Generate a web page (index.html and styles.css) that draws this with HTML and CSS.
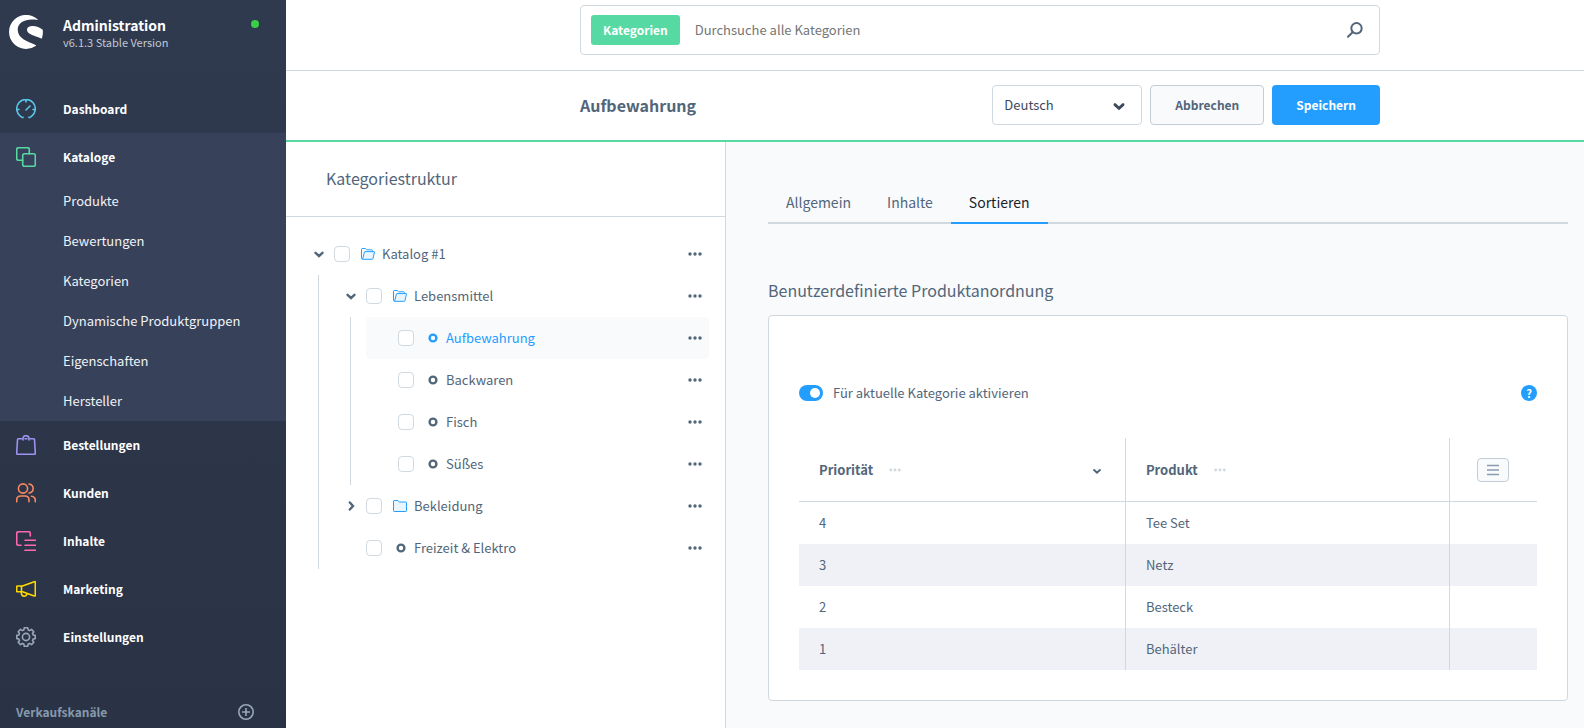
FILE: index.html
```html
<!DOCTYPE html>
<html lang="de">
<head>
<meta charset="utf-8">
<title>Aufbewahrung | Kategorien | Administration</title>
<link rel="stylesheet" href="styles.css">
</head>
<body>
<svg class="sprite" aria-hidden="true">
  <symbol id="chevron" viewBox="0 0 12 12"><path d="M2.500 4.800L6 8l3.500-3.200" fill="none" stroke="currentColor" stroke-width="2.400" stroke-linecap="round" stroke-linejoin="miter"/></symbol>
  <symbol id="dots" viewBox="0 0 14 4"><circle cx="2" cy="2" r="1.700"/><circle cx="7" cy="2" r="1.700"/><circle cx="12" cy="2" r="1.700"/></symbol>
  <symbol id="folder-open" viewBox="0 0 14 12"><path d="M1.6 11.3L3.4 3.6H13.5L11.7 11.3Z" fill="#e9f5ff"/><path d="M2 11.3C1 11.3.5 11 .5 10V1.2C.5.8.8.5 1.2.5H4.2L5.6 1.8H10.6C11 1.8 11.3 2 11.3 2.5V3.6M1.6 11.3L3.4 4C3.5 3.7 3.7 3.6 4 3.6H13.1C13.4 3.6 13.6 3.8 13.5 4.1L11.9 10.8C11.8 11.1 11.6 11.3 11.3 11.3H2" fill="none" stroke="currentColor"/></symbol>
  <symbol id="folder" viewBox="0 0 14 12"><path d="M.5 1.2C.5.8.8.5 1.2.5H4.8L6.4 2H12.8C13.2 2 13.5 2.3 13.5 2.7V10.8C13.5 11.2 13.2 11.5 12.8 11.5H1.2C.8 11.5.5 11.2.5 10.8Z" fill="#e9f5ff" stroke="currentColor"/></symbol>
  <symbol id="ring" viewBox="0 0 10 10"><circle cx="5" cy="5" r="3.4" fill="none" stroke="currentColor" stroke-width="2.4"/></symbol>
</svg>
<div class="app">
  <aside class="sidebar">
    <header class="brand">
      <svg class="brand-logo" viewBox="0 0 34 34" aria-hidden="true"><path d="M28.700 4.500A17 17 0 1 0 27 30.700C27.200 30.400 27 30.100 26.600 29.900C18 26.400 8.700 23.500 8.700 14.600C8.700 8 15.500 4.600 22.500 4.600C25 4.600 27 4.700 28.400 5C28.900 5.100 29.100 4.800 28.700 4.500Z" fill="#fff"/><path d="M33.700 14.800C31 12.500 27.500 11.100 23.500 11.100C20.200 11.100 18 12.400 18 14.800C18 18.300 22.500 19.900 27 21.500C29.200 22.300 31 23 32.200 23.500C32.700 23.700 32.900 23.600 33 23.100C33.800 20.500 34.100 17.500 33.700 14.800Z" fill="#fff"/></svg>
      <div class="brand-text">
        <strong class="brand-name">Administration</strong>
        <span class="brand-version">v6.1.3 Stable Version</span>
      </div>
      <span class="brand-status"></span>
    </header>
    <nav class="nav">
      <a class="nav-item" href="#"><svg class="nav-icon cyan" viewBox="0 0 20 20"><path d="M7 18.300C6.800 18.700 5.700 18.500 4.500 17.300A9.300 9.300 0 1 1 15.500 17.300C14.300 18.500 13.200 18.700 13 18.300M10 11L14 7M1 10.500H3M17 10.500H19M10 1V3"/></svg>Dashboard</a>
      <div class="nav-group">
        <a class="nav-item" href="#"><svg class="nav-icon green" viewBox="0 0 20 20"><rect x="6.700" y="6.700" width="12.600" height="12.600" rx="1.800"/><path d="M6.700 13.300H2.500Q.7 13.300.7 11.500V2.500Q.7.7 2.500.7H11.500Q13.300.7 13.300 2.500V6.700"/></svg>Kataloge</a>
        <a class="nav-sub" href="#">Produkte</a>
        <a class="nav-sub" href="#">Bewertungen</a>
        <a class="nav-sub" href="#">Kategorien</a>
        <a class="nav-sub" href="#">Dynamische Produktgruppen</a>
        <a class="nav-sub" href="#">Eigenschaften</a>
        <a class="nav-sub" href="#">Hersteller</a>
      </div>
      <a class="nav-item" href="#"><svg class="nav-icon violet" viewBox="0 0 20 20"><path d="M5.500 3.700H2.300Q1.500 3.700 1.500 4.500L.7 18.200Q.7 19.300 1.800 19.300H18.200Q19.300 19.300 19.300 18.200L18.500 4.500Q18.500 3.700 17.700 3.700H14.500M7 5V3.500C7 1.500 8.200.7 10 .7S13 1.500 13 3.500V5M9 3.700H11"/></svg>Bestellungen</a>
      <a class="nav-item" href="#"><svg class="nav-icon orange" viewBox="0 0 20 20"><circle cx="7" cy="5.500" r="4.600"/><path d="M.7 18.700V17Q.7 13 4.700 13H9Q13 13 13 17V18.700M13 1C18.500 1.800 18.500 9 13 10M15.500 13.200Q19.300 13.800 19.300 17V18.700"/></svg>Kunden</a>
      <a class="nav-item" href="#"><svg class="nav-icon pink" viewBox="0 0 20 20"><path d="M5 14.300H2.500Q.7 14.300.7 12.500V2.500Q.7.7 2.500.7H12.500Q14.300.7 14.300 2.500V5M9 9.300H19.500M9 14.300H19.500M9 19.300H19.500"/></svg>Inhalte</a>
      <a class="nav-item" href="#"><svg class="nav-icon yellow" viewBox="0 0 20 20"><path d="M6.500 7H1.500Q.7 7 .7 7.800V12Q.7 12.800 1.500 12.800H6.500M5.500 7V12.800M6.500 7L18.300 2.700Q19.300 2.400 19.300 3.400V16.300Q19.300 17.300 18.300 17L6.500 12.800M5.500 12.800C5 15.500 6.200 17.200 8.200 17.200C9.800 17.200 10.800 16 11 14.500"/></svg>Marketing</a>
      <a class="nav-item" href="#"><svg class="nav-icon grey" viewBox="0 0 20 20"><circle cx="10" cy="10" r="3.600"/><path d="M8.300.8H11.700L12.200 3L13.600 3.600L15.500 2.400L17.800 4.700L16.500 6.500L17.100 8L19.200 8.400V11.600L17.100 12L16.500 13.500L17.800 15.300L15.500 17.600L13.600 16.400L12.200 17L11.700 19.200H8.300L7.800 17L6.400 16.400L4.500 17.600L2.200 15.300L3.500 13.500L2.900 12L.8 11.600V8.400L2.900 8L3.500 6.500L2.200 4.700L4.500 2.400L6.400 3.600L7.800 3Z"/></svg>Einstellungen</a>
    </nav>
    <div class="channels">
      <span>Verkaufskanäle</span>
      <button class="icon-button" type="button" aria-label="Verkaufskanal hinzufügen"><svg class="channels-add" viewBox="0 0 16 16"><path d="M8 4V12M4 8H12"/><circle cx="8" cy="8" r="7.200"/></svg></button>
    </div>
  </aside>

  <main class="page">
    <div class="searchbar">
      <div class="search">
        <button class="search-type" type="button">Kategorien</button>
        <input class="search-input" type="search" placeholder="Durchsuche alle Kategorien" aria-label="Suche">
        <svg class="search-icon" viewBox="0 0 16 16" aria-hidden="true"><circle cx="9.500" cy="6.300" r="5.200"/><path d="M5.600 10.200L1 14.800"/></svg>
      </div>
    </div>
    <div class="smartbar">
      <div class="smartbar-inner">
        <h1 class="smartbar-title">Aufbewahrung</h1>
        <div class="select">
          <select class="select-field" aria-label="Sprache"><option>Deutsch</option><option>English</option></select>
          <svg class="select-arrow" aria-hidden="true"><use href="#chevron"/></svg>
        </div>
        <button class="button" type="button">Abbrechen</button>
        <button class="button button-primary" type="button">Speichern</button>
      </div>
    </div>

    <div class="content">
      <section class="structure">
        <h2 class="structure-title">Kategoriestruktur</h2>
        <ul class="tree">
          <li>
            <div class="row"><button class="toggle" type="button" aria-label="Zuklappen"><svg class="chevron"><use href="#chevron"/></svg></button><input class="check" type="checkbox" id="c1"><svg class="folder"><use href="#folder-open"/></svg><label class="row-label" for="c1">Katalog #1</label><button class="icon-button" type="button" aria-label="Menü"><svg class="dots"><use href="#dots"/></svg></button></div>
            <ul class="branch">
              <li>
                <div class="row"><button class="toggle" type="button" aria-label="Zuklappen"><svg class="chevron"><use href="#chevron"/></svg></button><input class="check" type="checkbox" id="c2"><svg class="folder"><use href="#folder-open"/></svg><label class="row-label" for="c2">Lebensmittel</label><button class="icon-button" type="button" aria-label="Menü"><svg class="dots"><use href="#dots"/></svg></button></div>
                <ul class="branch">
                  <li><div class="row leaf active"><input class="check" type="checkbox" id="c3"><svg class="ring"><use href="#ring"/></svg><label class="row-label" for="c3">Aufbewahrung</label><button class="icon-button" type="button" aria-label="Menü"><svg class="dots"><use href="#dots"/></svg></button></div></li>
                  <li><div class="row leaf"><input class="check" type="checkbox" id="c4"><svg class="ring"><use href="#ring"/></svg><label class="row-label" for="c4">Backwaren</label><button class="icon-button" type="button" aria-label="Menü"><svg class="dots"><use href="#dots"/></svg></button></div></li>
                  <li><div class="row leaf"><input class="check" type="checkbox" id="c5"><svg class="ring"><use href="#ring"/></svg><label class="row-label" for="c5">Fisch</label><button class="icon-button" type="button" aria-label="Menü"><svg class="dots"><use href="#dots"/></svg></button></div></li>
                  <li><div class="row leaf"><input class="check" type="checkbox" id="c6"><svg class="ring"><use href="#ring"/></svg><label class="row-label" for="c6">Süßes</label><button class="icon-button" type="button" aria-label="Menü"><svg class="dots"><use href="#dots"/></svg></button></div></li>
                </ul>
              </li>
              <li><div class="row"><button class="toggle" type="button" aria-label="Aufklappen"><svg class="chevron closed"><use href="#chevron"/></svg></button><input class="check" type="checkbox" id="c7"><svg class="folder"><use href="#folder"/></svg><label class="row-label" for="c7">Bekleidung</label><button class="icon-button" type="button" aria-label="Menü"><svg class="dots"><use href="#dots"/></svg></button></div></li>
              <li><div class="row leaf"><input class="check" type="checkbox" id="c8"><svg class="ring"><use href="#ring"/></svg><label class="row-label" for="c8">Freizeit &amp; Elektro</label><button class="icon-button" type="button" aria-label="Menü"><svg class="dots"><use href="#dots"/></svg></button></div></li>
            </ul>
          </li>
        </ul>
      </section>

      <section class="detail">
        <nav class="tabs">
          <a class="tab" href="#">Allgemein</a>
          <a class="tab" href="#">Inhalte</a>
          <a class="tab current" href="#">Sortieren</a>
        </nav>
        <h2 class="card-title">Benutzerdefinierte Produktanordnung</h2>
        <div class="card">
          <div class="option">
            <input class="switch" type="checkbox" role="switch" id="active" checked>
            <label class="option-label" for="active">Für aktuelle Kategorie aktivieren</label>
            <button class="help" type="button" aria-label="Hilfe">?</button>
          </div>
          <table class="grid">
            <colgroup><col class="col-priority"><col class="col-product"><col class="col-settings"></colgroup>
            <thead>
              <tr>
                <th><div class="head">Priorität <svg class="dots head-dots"><use href="#dots"/></svg><svg class="sort"><use href="#chevron"/></svg></div></th>
                <th><div class="head">Produkt <svg class="dots head-dots"><use href="#dots"/></svg></div></th>
                <th class="settings-cell"><button class="settings" type="button" aria-label="Spalten"><svg class="settings-icon" viewBox="0 0 12 12"><path d="M0 1.500H12M0 6H12M0 10.500H12"/></svg></button></th>
              </tr>
            </thead>
            <tbody>
              <tr><td>4</td><td>Tee Set</td><td></td></tr>
              <tr><td>3</td><td>Netz</td><td></td></tr>
              <tr><td>2</td><td>Besteck</td><td></td></tr>
              <tr><td>1</td><td>Behälter</td><td></td></tr>
            </tbody>
          </table>
        </div>
      </section>
    </div>
  </main>
</div>
</body>
</html>
```
FILE: styles.css
```css
:root {
  --text: #52667a;
  --line: #d1d9e0;
  --blue: #239eff;
  --green: #57d9a3;
}

*, *::before, *::after { box-sizing: border-box; }

body {
  margin: 0;
  color: var(--text);
  background: #fff;
  font: 13px/20px "Source Sans Pro", "Noto Sans CJK SC", "Open Sans", sans-serif;
}

a { color: inherit; text-decoration: none; }
button, input, select { font: inherit; color: inherit; }
button { padding: 0; border: 0; background: none; }
h1, h2, ul { margin: 0; padding: 0; }
ul { list-style: none; }
svg { flex: none; display: block; }
.sprite { position: absolute; width: 0; height: 0; }
.icon-button { display: flex; }

.app { display: flex; min-height: 100vh; }

/* Sidebar */
.sidebar {
  flex: none;
  width: 286px;
  color: #fff;
  background: linear-gradient(#303a4f, #2a3345);
}
.brand {
  display: flex;
  height: 85px;
  padding: 15px 27px 0 9px;
}
.brand-logo { width: 34px; height: 34px; }
.brand-text { flex: 1; display: flex; flex-direction: column; margin-left: 20px; }
.brand-name { font-size: 14px; line-height: 20px; }
.brand-version { color: #c2c8d2; font-size: 11px; line-height: 14px; }
.brand-status { width: 8px; height: 8px; margin-top: 5px; border-radius: 50%; background: #37d046; }
.nav-item {
  display: flex;
  align-items: center;
  gap: 27px;
  height: 48px;
  padding-left: 16px;
  font-size: 12px;
  font-weight: 600;
}
.nav-icon {
  width: 20px;
  height: 20px;
  fill: none;
  stroke: currentColor;
  stroke-width: 1.6;
  stroke-linecap: round;
  stroke-linejoin: round;
}
.cyan { color: #58c7e8; }
.green { color: #57d9a3; }
.violet { color: #a092f0; }
.orange { color: #f88962; }
.pink { color: #ff68b4; }
.yellow { color: #ffd700; }
.grey { color: #9aa8b5; }
.nav-group { background: #37415a; }
.nav-sub { display: block; padding: 10px 16px 10px 63px; color: #f0f2f5; }
.channels {
  display: flex;
  align-items: center;
  justify-content: space-between;
  padding: 41px 32px 6px 16px;
  color: #8799ac;
  font-size: 12px;
  font-weight: 600;
}
.channels-add { width: 16px; height: 16px; fill: none; stroke: #9aa8b5; stroke-width: 1.6; }

/* Top bars */
.page { flex: 1; min-width: 0; display: flex; flex-direction: column; }
.searchbar { padding: 5px 16px 15px 106px; border-bottom: 1px solid var(--line); }
.search {
  display: flex;
  align-items: center;
  max-width: 800px;
  height: 50px;
  margin: 0 auto;
  padding: 0 16px 0 10px;
  border: 1px solid var(--line);
  border-radius: 4px;
}
.search-type {
  height: 30px;
  padding: 0 12px;
  border-radius: 3px;
  color: #fff;
  background: var(--green);
  font-size: 12px;
  font-weight: 600;
}
.search-input {
  flex: 1;
  min-width: 0;
  padding: 0 15px;
  border: 0;
  outline: 0;
  background: none;
}
.search-input::placeholder { color: #757575; }
.search-icon { width: 16px; height: 16px; fill: none; stroke: var(--text); stroke-width: 2; stroke-linecap: round; }
.smartbar { padding: 14px 16px 15px 106px; border-bottom: 2px solid var(--green); }
.smartbar-inner { display: flex; align-items: center; gap: 8px; max-width: 800px; margin: 0 auto; }
.smartbar-title { flex: 1; font-size: 16px; line-height: 24px; font-weight: 600; }
.select { position: relative; width: 150px; }
.select-field {
  width: 100%;
  height: 40px;
  padding: 0 11px;
  appearance: none;
  border: 1px solid var(--line);
  border-radius: 4px;
  color: #3d4a5c;
  background: #fff;
}
.select-arrow { position: absolute; top: 14px; right: 16px; width: 14px; height: 14px; color: #3d4a5c; pointer-events: none; }
.button {
  height: 40px;
  padding: 0 24px;
  border: 1px solid #c2cdd8;
  border-radius: 4px;
  background: #f9fafc;
  font-size: 12px;
  font-weight: 600;
}
.button-primary { border: 0; color: #fff; background: var(--blue); }

/* Category tree */
.content { flex: 1; display: flex; }
.structure { flex: none; width: 440px; border-right: 1px solid var(--line); }
.structure-title {
  padding: 24px 40px 26px;
  border-bottom: 1px solid var(--line);
  font-size: 16px;
  line-height: 24px;
  font-weight: 400;
}
.tree { padding: 16px; }
.branch { margin-left: 16px; padding-left: 15px; border-left: 1px solid var(--line); }
.row { display: flex; align-items: center; height: 42px; padding-right: 7px; border-radius: 4px; }
.leaf { padding-left: 32px; }
.active { background: #f9fafc; }
.toggle { display: flex; width: 32px; padding-left: 11px; }
.chevron { width: 12px; height: 12px; }
.closed { transform: rotate(-90deg); }
.check {
  flex: none;
  width: 16px;
  height: 16px;
  margin: 0;
  appearance: none;
  border: 1px solid var(--line);
  border-radius: 4px;
  background: #fff;
}
.folder { width: 14px; height: 12px; margin: 0 7px 0 11px; color: var(--blue); }
.ring { width: 10px; height: 10px; margin: 0 8px 0 14px; }
.row-label { flex: 1; }
.active .ring, .active .row-label { color: var(--blue); }
.dots { width: 14px; height: 4px; fill: currentColor; }

/* Detail */
.detail { flex: 1; min-width: 0; padding: 40px 16px 27px 42px; background: #f9fafc; }
.tabs { display: flex; border-bottom: 2px solid var(--line); font-size: 14px; }
.tab { padding: 10px 18px; margin-bottom: -2px; border-bottom: 2px solid transparent; }
.current { border-color: var(--blue); color: #1a1f2b; }
.card-title { margin: 54px 0 13px; font-size: 16px; line-height: 24px; font-weight: 400; }
.card { padding: 67px 30px 30px; border: 1px solid var(--line); border-radius: 4px; background: #fff; }
.option { display: flex; align-items: center; gap: 10px; margin-bottom: 35px; }
.switch {
  display: flex;
  width: 24px;
  height: 16px;
  margin: 0;
  padding: 3px;
  appearance: none;
  border-radius: 8px;
  background: #c2cdd8;
}
.switch::before { content: ""; width: 10px; height: 10px; border-radius: 50%; background: #fff; }
.switch:checked { justify-content: flex-end; background: var(--blue); }
.option-label { flex: 1; }
.help {
  width: 16px;
  height: 16px;
  border-radius: 50%;
  color: #fff;
  background: var(--blue);
  font-size: 11px;
  line-height: 16px;
  font-weight: 700;
}
.grid { width: 100%; table-layout: fixed; border-collapse: separate; border-spacing: 0; }
.col-priority { width: 44.3%; }
.col-product { width: 43.9%; }
.grid th { height: 64px; padding: 0 20px; border-bottom: 1px solid var(--line); text-align: left; font-weight: 700; }
.grid td { height: 42px; padding: 0 20px; }
.grid th:not(:last-child), .grid td:not(:last-child) { border-right: 1px solid var(--line); }
.grid tbody tr:nth-child(even) { background: #f0f1f6; }
.head { display: flex; align-items: center; }
.head-dots { width: 12px; margin-left: 16px; color: var(--line); }
.sort { width: 10px; height: 10px; margin: 2px 3px 0 auto; }
.grid .settings-cell { padding: 0; }
.settings {
  display: flex;
  align-items: center;
  justify-content: center;
  width: 32px;
  height: 24px;
  margin: 0 auto;
  border: 1px solid #c2cdd8;
  border-radius: 4px;
  background: #f9fafc;
}
.settings-icon { width: 12px; height: 12px; stroke: #8a9cb0; stroke-width: 1.5; }
```
